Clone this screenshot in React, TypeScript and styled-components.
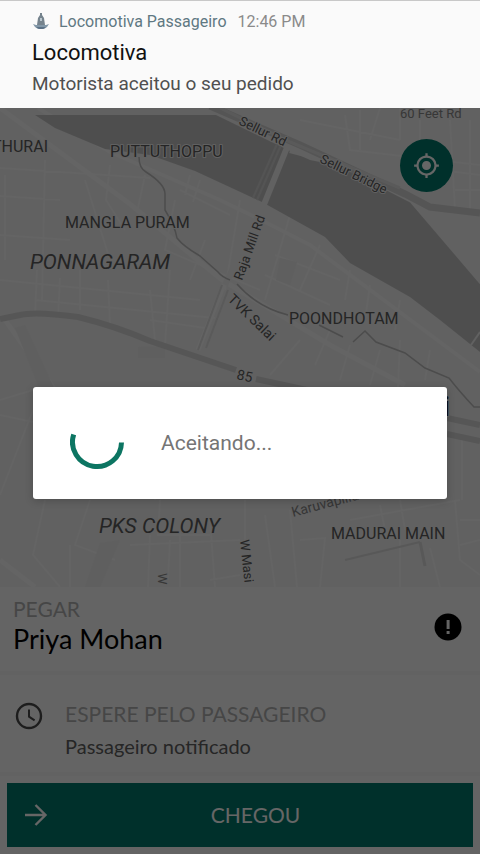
import React from "react";
import styled, { createGlobalStyle } from "styled-components";
import { MdGpsFixed } from "react-icons/md";

const GlobalStyle = createGlobalStyle`
  *, *::before, *::after { box-sizing: border-box; }
  body { margin: 0; background: #fafafa; }
`;

const Screen = styled.div`
  position: relative;
  display: flex;
  flex-direction: column;
  min-height: 100vh;
  background: #fafafa;
  font-family: Lato, "Liberation Sans", sans-serif;
  color: #000;
`;

const MapArea = styled.section`
  position: relative;
  flex: 1 0 auto;
  min-height: 480px;
  overflow: hidden;
  background: #f2f2f2;
`;

const MapDrawing = styled.svg`
  position: absolute;
  inset: 0;
  width: 100%;
  height: 100%;
`;

const MapLabel = styled.text<{ $size?: number; $italic?: boolean; $tone?: string; $weight?: number }>`
  font-family: Roboto, sans-serif;
  font-size: ${(p) => p.$size ?? 16}px;
  font-style: ${(p) => (p.$italic ? "italic" : "normal")};
  font-weight: ${(p) => p.$weight ?? 400};
  fill: ${(p) => p.$tone ?? "#5c5c5c"};
  stroke: #f2f2f2;
  stroke-width: 2px;
  stroke-linejoin: round;
  paint-order: stroke;
`;

const LocateButton = styled.button`
  position: absolute;
  top: 139px;
  right: 27px;
  display: grid;
  place-items: center;
  width: 53px;
  height: 53px;
  padding: 0;
  border: 0;
  border-radius: 50%;
  background: #00796b;
  color: #fff;
`;

const Pickup = styled.section`
  display: flex;
  align-items: center;
  justify-content: space-between;
  padding: 10px 18px 14px 13px;
  border-bottom: 4px solid #f5f5f5;
`;

const Caption = styled.p`
  margin: 0;
  font-size: 21px;
  line-height: 24px;
  color: #b0b0b0;
`;

const PassengerName = styled.h2`
  margin: 0;
  font-size: 27px;
  line-height: 36px;
  font-weight: 400;
`;

const InfoButton = styled.button`
  display: grid;
  padding: 0;
  border: 0;
  background: none;
  color: #000;
`;

const WaitRow = styled.section`
  display: flex;
  gap: 21px;
  padding: 27px 14px 6px;
`;

const WaitText = styled.p`
  margin: 0;
  font-size: 20px;
  line-height: 40px;
  color: #606060;
`;

const Footer = styled.footer`
  padding: 7px;
  border-top: 4px solid #f5f5f5;
`;

const ArrivedButton = styled.button`
  display: grid;
  grid-template-columns: 30px 1fr;
  align-items: center;
  width: 100%;
  height: 64px;
  padding: 0 0 0 14px;
  border: 0;
  background: #00796b;
  color: #fff;
  font: 400 21px/24px Lato, "Liberation Sans", sans-serif;
  text-align: center;
`;

const ButtonLabel = styled.span`
  padding-right: 13px;
`;

const Scrim = styled.div`
  position: absolute;
  inset: 0;
  display: flex;
  align-items: center;
  padding: 32px 33px 0;
  background: rgba(0, 0, 0, 0.6);
`;

const Dialog = styled.div`
  display: flex;
  align-items: center;
  gap: 37px;
  width: 100%;
  height: 112px;
  padding: 0 37px;
  border-radius: 3px;
  background: #fff;
  box-shadow: 0 2px 8px rgba(0, 0, 0, 0.2);
  color: #757575;
  font: 400 21px/24px Roboto, sans-serif;
`;

const Notification = styled.header`
  position: absolute;
  top: 0;
  left: 0;
  right: 0;
  padding: 8px 32px 9px;
  border-top: 1px solid #c8c8c8;
  background: #fafafa;
  font-family: Roboto, sans-serif;
`;

const NotificationMeta = styled.div`
  display: flex;
  align-items: center;
  height: 24px;
  font-size: 16px;
  color: #8a8a8a;
`;

const AppName = styled.span`
  margin: 0 11px 0 9px;
  color: #5f7882;
`;

const NotificationTitle = styled.h1`
  margin: 4px 0 0;
  font-size: 22px;
  line-height: 32px;
  font-weight: 400;
  color: #111;
`;

const NotificationBody = styled.p`
  margin: 0;
  font-size: 19px;
  line-height: 30px;
  color: #505050;
`;

const minorRoads =
  "M0 168 L150 178 M0 196 L60 200 M45 160 L42 300 M5 175 V260 M85 180 L110 260 M0 235 L70 240 M110 165 L106 200 L125 230 M145 175 L138 208 M0 280 L200 300 M37 270 L35 315 M60 278 L58 318 M80 270 V310 M108 280 L110 325 M150 290 L155 340 M170 270 L165 345 M35 300 L215 318 M150 320 L205 328 M205 240 L190 280 M175 200 L165 250 L260 290 M240 200 L225 290 M290 215 L265 300 M320 245 L300 290 M265 275 L330 305 M275 255 L340 280 M350 270 L345 300 M370 285 L365 320 M400 300 L395 330 M180 190 L230 215 M190 175 L185 195 M200 180 L193 202 M300 340 L270 375 M330 330 L315 365 M350 345 L340 380 M380 350 L370 385 M400 340 L398 387 M430 350 L425 380 M345 115 L350 150 L480 165 M360 110 V150 M380 108 L370 140 M400 108 V140 M420 120 V140 M450 120 L455 210 M470 120 V210 M300 120 L400 140 M440 170 L480 175 M455 190 H480 M0 400 L33 390 M0 415 L33 422 M33 410 L0 495 M45 500 L33 555 L60 587 M90 500 L75 545 L115 560 M70 545 V587 M160 500 L158 535 H210 M210 520 L215 587 M150 535 L148 587 M170 540 L168 580 M180 530 V587 M265 515 L275 587 M290 510 L297 587 M300 540 L325 538 L320 587 M380 505 L385 530 M400 500 L405 530 M430 548 L440 587 M455 500 L460 560 L480 575 M460 520 H480 M460 545 L480 540 M450 420 L480 425 M462 440 V500 M130 545 L240 540 M210 580 L240 575 M160 410 L155 500 M245 500 V540 M400 540 V587 M350 520 L460 500";

export default function App() {
  return (
    <>
      <GlobalStyle />
      <Screen>
        <MapArea aria-label="Mapa">
          <MapDrawing viewBox="0 0 480 587" preserveAspectRatio="xMidYMin slice">
            <g fill="none" stroke="#f9f9f9">
              <path d={minorRoads} strokeWidth="2" />
              <path d="M0 108 L130 204 L195 258 L222 280 L330 345 L405 385" strokeWidth="5" />
              <path d="M38 108 L110 152 L220 200 L265 222 L310 245 L480 372" strokeWidth="4" />
              <path d="M5 320 L55 390 M0 560 L35 587 M225 282 L198 350" strokeWidth="5" />
            </g>
            <g fill="#ededed">
              <path d="M15 328 L25 325 L55 390 H40Z M100 543 L120 540 L100 587 H85Z M138 347 L165 346 V358 L138 358Z" />
              <path d="M280 258 L297 262 L290 285 L276 280Z" />
            </g>
            <path fill="#c4c4c4" d="M35 115 H216 L288 150 L310 160 L340 166 L413 200 L480 280 V352 L440 320 L410 297 L350 263 L325 237 L298 222 L262 202 L195 171 L150 155 L105 149 L55 128Z" />
            <path fill="none" stroke="#f2f2f2" strokeWidth="6" d="M290 150 L340 163 L412 200 L482 282" />
            <path fill="none" stroke="#d4d4d4" strokeWidth="7" d="M210 106 L300 145 L405 194 L430 207 L480 213" />
            <path fill="none" stroke="#e2e2e2" strokeWidth="3" d="M220 108 L290 142 L400 188" />
            <path fill="none" stroke="#f2f2f2" strokeWidth="6" d="M288 145 L265 202 L225 285" />
            <path fill="none" stroke="#d2d2d2" strokeWidth="2" d="M281 145 L257 200 M277 144 L253 198" />
            <path fill="none" stroke="#e0e0e0" strokeWidth="2" d="M222 285 L198 350 M228 290 L206 348" />
            <path fill="none" stroke="#f2f2f2" strokeWidth="2" d="M480 332 L471 345" />
            <path fill="none" stroke="#d7d7d7" strokeWidth="6" d="M0 319 L20 315 Q35 311 78 317 Q115 326 150 341 L236 370 M256 379 L330 395 L447 418 L480 425 M447 434 L480 441" />
            <g fill="none" stroke="#bdbdbd" strokeWidth="1.5">
              <path d="M139 157 Q139 168 146 172 Q165 184 165 194 V210 Q175 226 177 238 Q183 246 200 256 L218 272 Q222 277 230 280 M237 284 Q257 307 288 315 M319 325 L343 337 M353 342 L365 331 L376 342 L405 353 L425 368 L449 378 Q459 391 474 407 H480" />
              <path d="M345 560 L420 542" stroke="#dcdcdc" strokeWidth="2" />
              <path d="M420 542 L425 566" stroke="#dcdcdc" strokeWidth="3" />
            </g>
            <MapLabel x="48" y="152" textAnchor="end">THURAI</MapLabel>
            <MapLabel x="110" y="157">PUTTUTHOPPU</MapLabel>
            <MapLabel x="65" y="228">MANGLA PURAM</MapLabel>
            <MapLabel x="30" y="269" $size={21} $italic>PONNAGARAM</MapLabel>
            <MapLabel x="289" y="324">POONDHOTAM</MapLabel>
            <MapLabel x="99" y="533" $size={21} $italic>PKS COLONY</MapLabel>
            <MapLabel x="331" y="539">MADURAI MAIN</MapLabel>
            <MapLabel x="450" y="416" textAnchor="end" $size={27} $weight={500} $tone="#202020">Madurai</MapLabel>
            <MapLabel x="400" y="118" $size={13} $tone="#8a8a8a">60 Feet Rd</MapLabel>
            <MapLabel transform="translate(238 124) rotate(26)" $size={13}>Sellur Rd</MapLabel>
            <MapLabel transform="translate(319 162) rotate(26)" $size={13}>Sellur Bridge</MapLabel>
            <MapLabel transform="translate(242 281) rotate(-70)" $size={13}>Raja Mill Rd</MapLabel>
            <MapLabel transform="translate(227 300) rotate(44)" $size={14}>TVK Salai</MapLabel>
            <MapLabel transform="translate(236 379) rotate(12)" $size={14}>85</MapLabel>
            <MapLabel transform="translate(293 517) rotate(-15)" $size={14} $tone="#8a8a8a">Karuvapillai</MapLabel>
            <MapLabel transform="translate(240 540) rotate(84)" $size={13}>W Masi</MapLabel>
            <MapLabel transform="translate(158 573) rotate(90)" $size={13} $tone="#8a8a8a">W</MapLabel>
          </MapDrawing>
          <LocateButton aria-label="Minha localização">
            <MdGpsFixed size={27} />
          </LocateButton>
        </MapArea>

        <Pickup>
          <div>
            <Caption>PEGAR</Caption>
            <PassengerName>Priya Mohan</PassengerName>
          </div>
          <InfoButton aria-label="Informações">
            <svg width="28" height="28" viewBox="0 0 28 28">
              <circle cx="14" cy="14" r="13.5" fill="currentColor" />
              <path d="M12.600 7h3v9h-3zM12.600 18h3v3h-3z" fill="#fafafa" />
            </svg>
          </InfoButton>
        </Pickup>

        <WaitRow>
          <svg width="30" height="30" viewBox="0 0 30 30" fill="none" stroke="#4a4a4a" aria-hidden="true">
            <circle cx="15" cy="14" r="12" strokeWidth="2.4" />
            <path d="M15 7.500v7.200l5.600 3.600" strokeWidth="2" />
          </svg>
          <div>
            <Caption>ESPERE PELO PASSAGEIRO</Caption>
            <WaitText>Passageiro notificado</WaitText>
          </div>
        </WaitRow>

        <Footer>
          <ArrivedButton>
            <svg width="30" height="30" viewBox="0 0 30 30" fill="none" stroke="currentColor" strokeWidth="2.4" aria-hidden="true">
              <path d="M4 15h20M14.500 5l10 10l-10 10" />
            </svg>
            <ButtonLabel>CHEGOU</ButtonLabel>
          </ArrivedButton>
        </Footer>

        <Scrim>
          <Dialog role="alertdialog" aria-label="Aceitando">
            <svg width="54" height="54" viewBox="0 0 54 54" fill="none" aria-hidden="true">
              <path d="M3.700 18.500A24.500 24.500 0 1 0 51.500 26.500" stroke="#0c7562" strokeWidth="5" />
            </svg>
            <span>Aceitando...</span>
          </Dialog>
        </Scrim>

        <Notification>
          <NotificationMeta>
            <svg width="18" height="18" viewBox="0 0 18 18" aria-hidden="true">
              <path d="M8 1h2v2l2 3 1 7H5l1-7 2-3z" fill="#75838d" />
              <path d="M8 6h2v3H8z" fill="#b9c6ce" />
              <path d="M1 12l3 1h10l3-1-2 3-3 2H6l-3-2z" fill="#8398a8" />
              <path d="M4 15h10l-3 2H7z" fill="#5b7186" />
            </svg>
            <AppName>Locomotiva Passageiro</AppName>
            <time>12:46 PM</time>
          </NotificationMeta>
          <NotificationTitle>Locomotiva</NotificationTitle>
          <NotificationBody>Motorista aceitou o seu pedido</NotificationBody>
        </Notification>
      </Screen>
    </>
  );
}
